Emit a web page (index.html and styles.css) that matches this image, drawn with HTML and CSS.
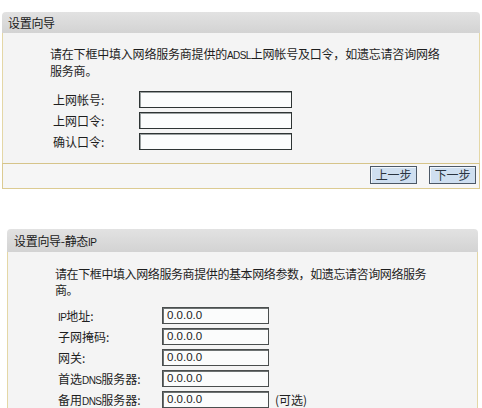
FILE: index.html
```html
<!DOCTYPE html>
<html lang="zh-CN">
<head>
<meta charset="utf-8">
<title>设置向导</title>
<link rel="stylesheet" href="styles.css">
</head>
<body>
<div class="panel p1">
  <div class="hd">设置向导</div>
  <div class="bd">
    <p class="intro">请在下框中填入网络服务商提供的<span class="asc">ADSL</span>上网帐号及口令，如遗忘请咨询网络<br>服务商。</p>
    <div class="rows">
      <div class="row"><span class="lbl">上网帐号:</span><span class="inp"></span></div>
      <div class="row"><span class="lbl">上网口令:</span><span class="inp"></span></div>
      <div class="row"><span class="lbl">确认口令:</span><span class="inp"></span></div>
    </div>
  </div>
  <div class="ft">
    <span class="btn">上一步</span>
    <span class="btn">下一步</span>
  </div>
</div>

<div class="panel p2">
  <div class="hd">设置向导-静态<span class="asc">IP</span></div>
  <div class="bd">
    <p class="intro">请在下框中填入网络服务商提供的基本网络参数，如遗忘请咨询网络服务<br>商。</p>
    <div class="rows">
      <div class="row"><span class="lbl"><span class="asc">IP</span>地址:</span><span class="inp">0.0.0.0</span></div>
      <div class="row"><span class="lbl">子网掩码:</span><span class="inp">0.0.0.0</span></div>
      <div class="row"><span class="lbl">网关:</span><span class="inp">0.0.0.0</span></div>
      <div class="row"><span class="lbl">首选<span class="asc">DNS</span>服务器:</span><span class="inp">0.0.0.0</span></div>
      <div class="row"><span class="lbl">备用<span class="asc">DNS</span>服务器:</span><span class="inp">0.0.0.0</span><span class="opt">(可选)</span></div>
    </div>
  </div>
</div>
</body>
</html>
```

FILE: styles.css
```css
html, body {
  margin: 0;
  padding: 0;
  background: #ffffff;
}
body {
  font-family: "Noto Sans CJK SC", "Noto Sans", sans-serif;
  font-size: 12px;
  color: #1e1e1e;
  width: 482px;
  height: 408px;
  overflow: hidden;
}
.panel {
  box-sizing: border-box;
}
.p1 {
  margin: 12px 0 0 2px;
  width: 478px;
}
.p2 {
  margin: 40px 0 0 7px;
  width: 471px;
}
.hd {
  box-sizing: border-box;
  height: 21px;
  line-height: 21px;
  padding-left: 6px;
  background: linear-gradient(#e2e2e2, #d3d3d3);
  border-radius: 4px 4px 0 0;
  color: #1a1a1a;
  letter-spacing: -0.3px;
  overflow: hidden;
}
.p2 .hd {
  height: 23px;
  line-height: 23px;
  padding-left: 7px;
}
.bd {
  background: #f4f4f4;
  border-left: 1px solid #e4d7a6;
  border-right: 1px solid #e4d7a6;
  box-sizing: border-box;
}
.p1 .bd {
  height: 130px;
  padding: 12px 0 0 47px;
}
.p2 .bd {
  padding: 14px 0 20px 47px;
}
.intro {
  margin: 0;
  line-height: 17px;
  height: 34px;
  letter-spacing: -0.2px;
}
.p2 .intro {
  line-height: 16px;
  height: 32px;
  letter-spacing: -0.4px;
}
.asc {
  font-family: "Liberation Sans", sans-serif;
  font-size: 10px;
  line-height: 0;
  letter-spacing: -0.6px;
}
.rows {
  display: flex;
  flex-direction: column;
}
.p1 .rows {
  margin-top: 10px;
  padding-left: 3px;
}
.p2 .rows {
  margin-top: 7px;
  padding-left: 3px;
}
.row {
  display: flex;
  align-items: center;
  height: 21px;
}
.lbl {
  flex: none;
}
.p1 .lbl {
  width: 86px;
}
.p2 .lbl {
  width: 104px;
}
.inp {
  box-sizing: border-box;
  flex: none;
  height: 17px;
  background: #fbfcfc;
  border: 1px solid #2e3434;
  box-shadow: inset 1px 1px 0 #9aa0a0;
  font-family: "Liberation Sans", sans-serif;
  font-size: 11.5px;
  line-height: 15px;
  padding-left: 4px;
  color: #222;
}
.p1 .inp {
  width: 153px;
}
.p2 .inp {
  width: 107px;
  border-color: #4a4e4e;
  box-shadow: inset 1px 1px 0 #6d7272;
}
.opt {
  margin-left: 6px;
  color: #222;
}
.ft {
  box-sizing: border-box;
  height: 26px;
  background: #f6f6f6;
  border: 1px solid #dccb92;
  border-top-color: #d6c48a;
  display: flex;
  justify-content: flex-end;
  align-items: flex-start;
  gap: 12px;
  padding: 2px 3px 0 0;
}
.btn {
  box-sizing: border-box;
  width: 47px;
  height: 18px;
  line-height: 16px;
  text-align: center;
  background: #cfdff0;
  border: 1px solid #4c5866;
  box-shadow: inset 1px 1px 0 #f0f6fc;
  color: #2a3440;
  letter-spacing: -0.2px;
}
```
